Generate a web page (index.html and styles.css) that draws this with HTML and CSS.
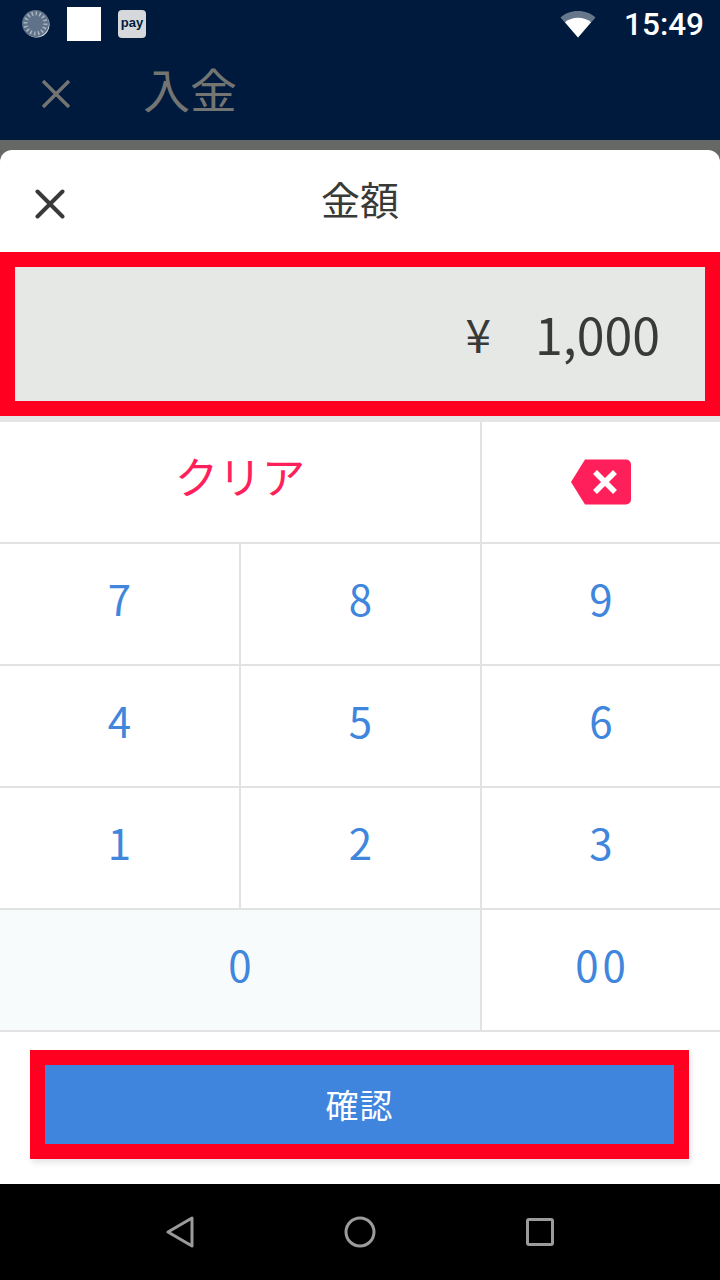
FILE: index.html
```html
<!DOCTYPE html>
<html lang="ja">
<head>
<meta charset="utf-8">
<title>金額</title>
<link rel="stylesheet" href="styles.css">
</head>
<body>
<div class="screen">
  <header class="top">
    <div class="status">
      <svg class="spinner" width="28" height="28" viewBox="0 0 28 28">
        <circle cx="14.5" cy="14.5" r="13" fill="#e8ebee"/>
        <circle cx="13.5" cy="13.5" r="13.5" fill="#5f7289"/>
        <circle cx="13.5" cy="13.5" r="10" fill="none" stroke="#a9b4c0" stroke-width="4" stroke-dasharray="1.5 2.4"/>
      </svg>
      <div class="white-box"></div>
      <div class="pay">pay</div>
      <div class="spacer"></div>
      <svg class="wifi" width="36" height="28" viewBox="0 0 36 28">
        <path d="M0.5 7.5C5 3.2 11 1 18 1s13 2.2 17.500 6.500L18 27.500z" fill="#66778c"/>
        <path d="M5 12.200C8.500 9.300 13 7.700 18 7.700s9.500 1.600 13 4.500L18 27.500z" fill="#fff"/>
      </svg>
      <span class="clock">15:49</span>
    </div>
    <div class="appbar">
      <svg class="appbar-x" width="30" height="30" viewBox="0 0 30 30"><path d="M2 2l26 26M28 2L2 28" stroke="#737573" stroke-width="3.400" fill="none"/></svg>
      <span class="appbar-title">入金</span>
    </div>
  </header>
  <div class="dim"></div>
  <main class="sheet">
    <div class="sheet-head">
      <svg class="close" width="30" height="30" viewBox="0 0 30 30"><path d="M2.500 2.500l25 25M27.500 2.500l-25 25" stroke="#383a38" stroke-width="4" stroke-linecap="round" fill="none"/></svg>
      <h1 class="sheet-title">金額</h1>
    </div>
    <div class="amount"><span class="yen">¥</span><span class="value">1,000</span></div>
    <div class="keypad">
      <button class="key key-clear span-2">クリア</button>
      <button class="key key-icon">
        <svg width="62" height="46" viewBox="0 0 62 46"><path d="M15 0.500H56a5 5 0 0 1 5 5V40.500a5 5 0 0 1-5 5H15L1 23z" fill="#ff1f5a"/><path d="M25 13l20 20M45 13L25 33" stroke="#fff" stroke-width="5.500" fill="none"/></svg>
      </button>
      <button class="key">7</button><button class="key">8</button><button class="key">9</button>
      <button class="key">4</button><button class="key">5</button><button class="key">6</button>
      <button class="key">1</button><button class="key">2</button><button class="key">3</button>
      <button class="key key-zero span-2">0</button>
      <button class="key key-double">00</button>
    </div>
    <div class="confirm-wrap"><button class="confirm">確認</button></div>
  </main>
  <nav class="nav">
    <svg width="28" height="32" viewBox="0 0 28 32"><path d="M26 2v28L2 16z" fill="none" stroke="#9a9c9a" stroke-width="3" stroke-linejoin="round"/></svg>
    <svg width="32" height="32" viewBox="0 0 32 32"><circle cx="16" cy="16" r="14" fill="none" stroke="#9a9c9a" stroke-width="3"/></svg>
    <svg width="28" height="28" viewBox="0 0 28 28"><rect x="1.500" y="1.500" width="25" height="25" rx="1.500" fill="none" stroke="#9a9c9a" stroke-width="3"/></svg>
  </nav>
</div>
</body>
</html>
```

FILE: styles.css
```css
* { box-sizing: border-box; }
html, body { margin: 0; padding: 0; }
body { font-family: "Noto Sans CJK JP", "Noto Sans", sans-serif; background: #000; }
.screen { width: 720px; height: 1280px; display: flex; flex-direction: column; overflow: hidden; }

.top { height: 140px; background: #001a3d; flex: none; }
.status { height: 48px; display: flex; align-items: center; padding: 0 16px 0 22px; }
.spinner { flex: none; margin-right: 17px; }
.white-box { width: 34px; height: 34px; background: #fff; margin-right: 17px; }
.pay { width: 28px; height: 28px; background: #d5d9dc; border-radius: 4px; color: #001a3d; font: 700 13px/26px "Liberation Sans", sans-serif; text-align: center; }
.spacer { flex: 1; }
.wifi { flex: none; margin-right: 28px; }
.clock { color: #fff; font: 500 31.500px/48px Roboto, sans-serif; padding-top: 1px; }
.appbar { height: 92px; display: flex; align-items: center; padding-left: 41px; }
.appbar-x { flex: none; margin-right: 74px; }
.appbar-title { color: #737573; font-size: 47px; line-height: 1; margin-left: -2px; margin-bottom: 14px; }

.dim { height: 10px; flex: none; background: #666865; }
.sheet { height: 1034px; flex: none; background: #fff; border-radius: 12px 12px 0 0; box-shadow: 0 -10px 0 #666865; }

.sheet-head { height: 102px; display: flex; align-items: center; justify-content: center; position: relative; }
.close { position: absolute; left: 35px; top: 39px; }
.sheet-title { margin: 0 0 6px; font-size: 39px; font-weight: 400; color: #383a38; }

.amount { height: 164px; border: 15px solid #ff0020; background: #e6e8e6; display: flex; align-items: center; justify-content: flex-end; padding: 0 45px 2px 0; color: #383a38; font-size: 50px; }
.yen { margin-right: 44px; font-size: 46px; }

.keypad { display: grid; grid-template-columns: 241px 241px 238px; grid-auto-rows: 122px; border-top: 6px solid #e4e5e4; }
.key { border: 0; border-right: 2px solid #e1e2e1; border-bottom: 2px solid #e1e2e1; background: #fff; padding: 0 0 12px; color: #4086dd; font: 400 42px/1 "Noto Sans CJK JP", sans-serif; display: flex; align-items: center; justify-content: center; }
.key:nth-child(3n+2) { border-right: 0; }
.span-2 { grid-column: span 2; }
.key-clear { color: #ff1f5a; font-size: 43.500px; padding-bottom: 12px; }
.key-icon { padding: 0; }
.key-zero { background: #f8fbfb; }
.key-double { letter-spacing: 4px; border-right: 0; padding-left: 3px; }

.confirm-wrap { padding: 18px 0 0 30px; }
.confirm { display: block; width: 659px; height: 109px; border: 15px solid #ff0020; background: #3f85dd; color: #fff; font: 400 33px/1 "Noto Sans CJK JP", sans-serif; letter-spacing: 1px; padding: 0; box-shadow: 2px 4px 6px rgba(0,0,0,.1); }

.nav { height: 96px; flex: none; background: #000; display: grid; grid-template-columns: repeat(3, 180px); justify-content: center; justify-items: center; align-items: center; }
```
